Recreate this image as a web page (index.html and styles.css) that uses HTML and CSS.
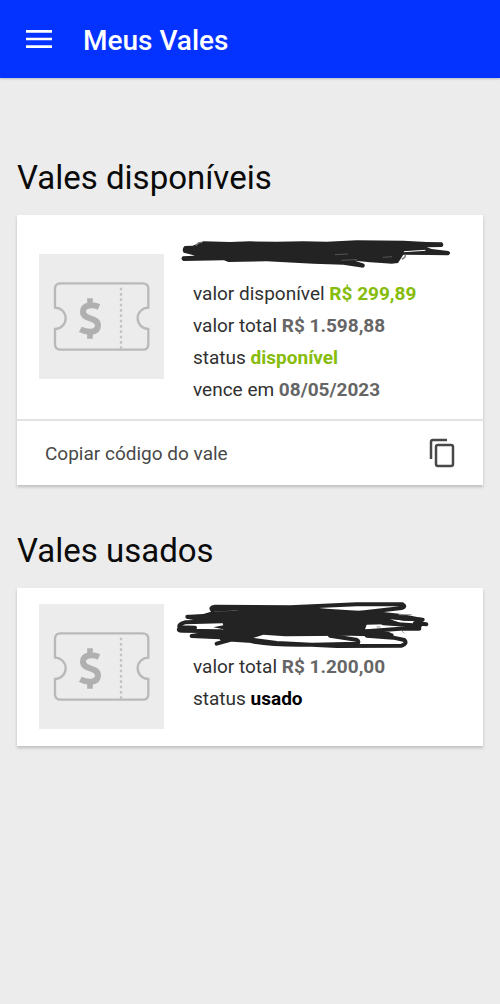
FILE: index.html
```html
<!DOCTYPE html>
<html lang="pt-BR">
<head>
<meta charset="utf-8">
<meta name="viewport" content="width=device-width, initial-scale=1">
<title>Meus Vales</title>
<link rel="stylesheet" href="styles.css">
</head>
<body>
<svg class="symbols" aria-hidden="true">
  <symbol id="ticket" viewBox="0 0 375 375">
    <g fill="none" stroke="#b9b9b9" stroke-width="7">
      <path d="M65 88H310Q328 88 328 104V161A31 31 0 0 0 328 225V270Q328 287 312 287H65Q48 287 48 270V225A31 31 0 0 0 48 161V104Q48 88 65 88Z"/>
      <path d="M246 101V284" stroke="#c3c3c3" stroke-dasharray="8 8"/>
    </g>
    <g fill="none" stroke="#b0b0b0">
      <path d="M153 133V158M153 229V254" stroke-width="17"/>
      <path d="M180 159C165 152 132 149 132 173C132 199 177 188 177 214C177 239 144 236 124 226" stroke-width="18"/>
    </g>
  </symbol>
</svg>
<header class="topbar">
  <button class="menu" type="button" aria-label="Menu">
    <svg width="26" height="18" viewBox="0 0 78 54" fill="none" stroke="currentColor" stroke-width="8"><path d="M0 4H78M0 27H78M0 50H78"/></svg>
  </button>
  <h1 class="title">Meus Vales</h1>
</header>
<main class="content">
  <section class="group">
    <h2 class="heading">Vales disponíveis</h2>
    <article class="card">
      <div class="body">
        <svg class="thumb" aria-hidden="true"><use href="#ticket"/></svg>
        <div class="details">
          <svg class="scribble" viewBox="18 -6 840 150" aria-hidden="true">
            <path fill="#232323" d="M44 48L68 47L100 34L180 36L240 34L320 35L400 34L470 35L560 31L700 32L770 36L816 37Q824 44 816 51L770 52L785 57L835 63Q846 69 835 76L780 75L700 74L684 99L665 101L635 99L600 97L555 92L582 101Q588 108 580 113L520 104L430 101L290 94L175 96L162 91L40 93Q30 87 38 79L75 77L60 73L41 68Q34 57 44 48Z"/>
            <g fill="none" stroke-linecap="round" stroke-width="4">
              <path stroke="#777" d="M79 46Q83 36 95 37M697 87Q706 84 706 76"/>
              <path stroke="#bbb" stroke-width="1" d="M496 74L532 72M515 91L560 89M640 82L665 80"/>
              <path stroke="#fff" stroke-width="3" d="M703 65L765 61"/>
            </g>
          </svg>
          <p class="row">valor disponível <strong class="green">R$ 299,89</strong></p>
          <p class="row">valor total <strong>R$ 1.598,88</strong></p>
          <p class="row">status <strong class="green">disponível</strong></p>
          <p class="row">vence em <strong>08/05/2023</strong></p>
        </div>
      </div>
      <button class="copy" type="button">
        <span>Copiar código do vale</span>
        <svg width="26" height="30" viewBox="0 0 26 30" fill="none" stroke="currentColor" stroke-width="2.500"><path d="M2 21V4Q2 2 4 2H18"/><rect x="7" y="7" width="17" height="21" rx="2"/></svg>
      </button>
    </article>
  </section>
  <section class="group">
    <h2 class="heading">Vales usados</h2>
    <article class="card">
      <div class="body">
        <svg class="thumb" aria-hidden="true"><use href="#ticket"/></svg>
        <div class="details">
          <svg class="scribble" viewBox="18 21 840 150" aria-hidden="true">
            <path fill="#232323" d="M50 64L100 60L128 52L190 51L240 43L310 37L410 38L470 44L540 49L640 54L700 61L760 73L750 82L700 80L655 73L690 88L650 91L590 92L585 106L660 115L668 128L540 125L345 127L280 122L235 137L150 133L65 131L60 122L155 115L160 106L130 100L160 94L155 82L90 82L50 74Z"/>
            <g fill="none" stroke="#232323" stroke-width="12" stroke-linecap="round" stroke-linejoin="round">
              <path d="M128 50Q118 40 135 38L360 40L560 31L698 31Q709 38 695 42L570 56M138 46L250 43"/>
              <path d="M52 68L110 68M155 82L45 85Q22 91 30 102Q20 110 38 110L155 112L65 126L150 130M32 100L75 101"/>
              <path d="M140 149L245 120M155 135L235 140Q300 155 430 152L560 149Q571 143 558 137L480 125M235 136L320 147L500 156L695 155Q713 148 703 138L670 131L590 125"/>
              <path d="M640 68L758 77L735 87L769 91M650 82L748 104L690 104L590 112L665 124M640 88L750 95"/>
            </g>
            <g fill="none" stroke="#999" stroke-width="3"><path d="M686 62H725M695 110L702 118M620 99H632"/></g>
          </svg>
          <p class="row">valor total <strong>R$ 1.200,00</strong></p>
          <p class="row">status <strong class="black">usado</strong></p>
        </div>
      </div>
    </article>
  </section>
</main>
</body>
</html>
```
FILE: styles.css
```css
* { box-sizing: border-box; }
body {
  margin: 0;
  min-height: 100vh;
  background: #ececec;
  color: #303030;
  font-family: Roboto, "Liberation Sans", sans-serif;
}
.symbols { position: absolute; width: 0; height: 0; }
button {
  border: 0;
  background: none;
  font: inherit;
  cursor: pointer;
}
.topbar {
  display: flex;
  align-items: center;
  gap: 31px;
  height: 78px;
  padding: 0 26px;
  background: #0433ff;
  color: #fff;
  box-shadow: 0 1px 2px rgba(0, 0, 0, .2);
}
.menu { padding: 0; color: inherit; }
.menu svg { display: block; }
.title {
  margin: 0;
  padding-top: 4px;
  font-size: 28px;
  line-height: 36px;
  font-weight: 500;
}
.content {
  display: flex;
  flex-direction: column;
  gap: 44px;
  padding: 78px 17px 32px;
}
.heading {
  margin: 0 0 15px;
  color: #0a0a0a;
  font-size: 33px;
  line-height: 44px;
  font-weight: 400;
}
.card {
  background: #fff;
  box-shadow: 0 2px 3px rgba(0, 0, 0, .2);
}
.body {
  display: flex;
  gap: 29px;
  padding: 13px 22px;
}
.thumb {
  flex: none;
  align-self: center;
  width: 125px;
  height: 125px;
  margin: 3px 0 4px;
  background: #ececec;
}
.details { flex: 1; min-width: 0; }
.scribble {
  display: block;
  width: 280px;
  height: 50px;
  margin-left: -17px;
}
.row {
  margin: 0;
  font-size: 19px;
  line-height: 32px;
}
.row strong { color: #666; font-weight: 700; }
.row .green { color: #86bc0c; }
.row .black { color: #000; }
.copy {
  display: flex;
  align-items: center;
  justify-content: space-between;
  width: 100%;
  height: 66px;
  padding: 0 28px;
  border-top: 2px solid #e2e2e2;
  color: #484848;
  font-size: 19px;
}
```
